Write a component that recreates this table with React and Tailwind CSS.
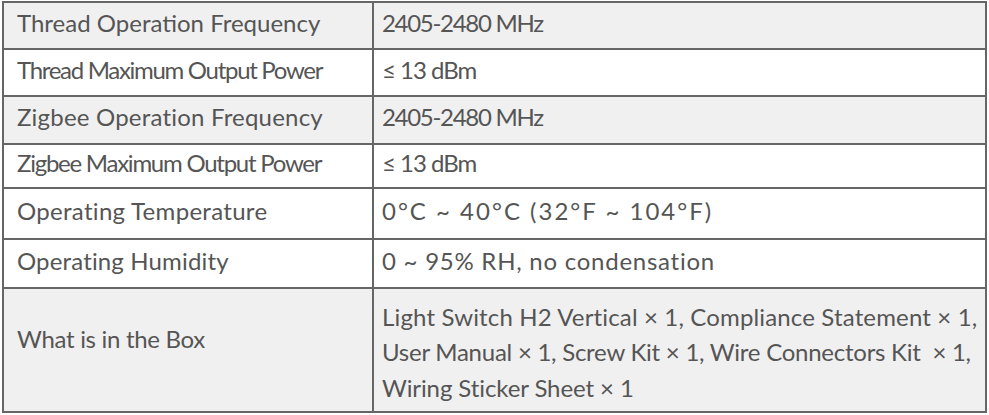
const rows = [
  { label: "Thread Operation Frequency", value: "2405-2480 MHz", h: "h-[47px]", shade: true, lt: "", vt: "tracking-[-1.3px]" },
  { label: "Thread Maximum Output Power", value: "≤ 13 dBm", h: "h-[47px]", lt: "tracking-[-1.3px]", vt: "tracking-[-1px]" },
  { label: "Zigbee Operation Frequency", value: "2405-2480 MHz", h: "h-[48px]", shade: true, lt: "tracking-[0.2px]", vt: "tracking-[-1.3px]" },
  { label: "Zigbee Maximum Output Power", value: "≤ 13 dBm", h: "h-[44px]", lt: "tracking-[-1.25px]", vt: "tracking-[-1px]" },
  { label: "Operating Temperature", value: "0°C ~ 40°C (32°F ~ 104°F)", h: "h-[51px]", lt: "tracking-[0.3px]", vt: "tracking-[2px]" },
  { label: "Operating Humidity", value: "0 ~ 95% RH, no condensation", h: "h-[49px]", lt: "tracking-[0.15px]", vt: "tracking-[0.75px]" },
];

const boxLines = [
  { text: "Light Switch H2 Vertical × 1, Compliance Statement × 1,", t: "tracking-[0.15px]" },
  { text: "User Manual × 1, Screw Kit × 1, Wire Connectors Kit\u00a0 × 1,", t: "tracking-[-0.25px]" },
  { text: "Wiring Sticker Sheet × 1", t: "tracking-[-0.1px]" },
];

export default function App() {
  return (
    <div className="bg-white w-[989px] h-[415px] pl-[2px] pt-px">
      <table
        className="w-[985px] border-collapse border-2 border-[#666] text-[24px] text-[#555] table-fixed"
        style={{ fontFamily: "Lato, 'Open Sans', sans-serif" }}
      >
        <colgroup>
          <col className="w-[370px]" />
          <col />
        </colgroup>
        <tbody>
          {rows.map((r) => (
            <tr key={r.label} className={`${r.h} ${r.shade ? "bg-[#f0f0f0]" : "bg-white"}`}>
              <td className={`border-2 border-[#666] pl-[13px] pb-[6px] whitespace-nowrap ${r.lt}`}>
                {r.label}
              </td>
              <td className={`border-2 border-[#666] pl-[8px] pb-[6px] whitespace-nowrap ${r.vt}`}>{r.value}</td>
            </tr>
          ))}
          <tr className="h-[124px] bg-[#f0f0f0]">
            <td className="border-2 border-[#666] pl-[13px] pb-[22px] whitespace-nowrap tracking-[-0.3px]">
              What is in the Box
            </td>
            <td className="border-2 border-[#666] pl-[8px] pt-[4px] leading-[35.5px] whitespace-nowrap">
              {boxLines.map((l) => (
                <div key={l.text} className={l.t}>{l.text}</div>
              ))}
            </td>
          </tr>
        </tbody>
      </table>
    </div>
  );
}
